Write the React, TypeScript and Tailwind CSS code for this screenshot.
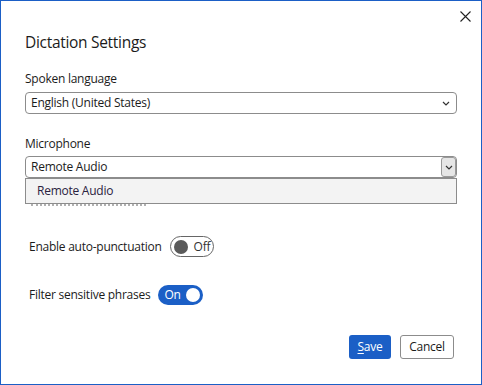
import React from "react";

const Chevron = () => (
  <svg width="8" height="5" viewBox="0 0 8 5" fill="none">
    <path d="M1 1l3 3 3-3" stroke="#333" strokeWidth="1.2" />
  </svg>
);

const App = () => {
  return (
    <div
      className="relative w-[482px] h-[385px] bg-white border border-[#1b5fc6] text-[#1b1b1b]"
      style={{ fontFamily: '"Open Sans", "Noto Sans", sans-serif' }}
    >
      {/* close */}
      <button className="absolute top-[9px] right-[10px] w-[12px] h-[12px] flex items-center justify-center">
        <svg width="11" height="11" viewBox="0 0 11 11">
          <path d="M0.5 0.5l10 10M10.5 0.5l-10 10" stroke="#222" strokeWidth="1.1" />
        </svg>
      </button>

      <div className="flex flex-col pl-[24px] pr-[24px] text-[12px] tracking-[-0.25px]">
        <h1 className="mt-[29px] text-[15.5px] leading-[24px] tracking-[-0.3px]">Dictation Settings</h1>

        <label className="mt-[16px] leading-[18px]">Spoken language</label>
        <div className="mt-[4px] h-[22px] w-[432px] rounded-[4px] border border-[#8c8c8c] flex items-center justify-between pl-[5px] pr-[6px]">
          <span>English (United States)</span>
          <Chevron />
        </div>

        <label className="mt-[21px] leading-[18px]">Microphone</label>
        <div className="relative mt-[3px]">
          <div className="h-[22px] w-[432px] rounded-[4px] border border-[#8c8c8c] flex items-center justify-between pl-[5px]">
            <span>Remote Audio</span>
            <div className="h-[20px] w-[15px] rounded-[3px] border border-[#9a9a9a] bg-[#e6e6e6] flex items-center justify-center">
              <Chevron />
            </div>
          </div>
          {/* open list */}
          <div className="absolute left-0 top-[22px] z-10 h-[26px] w-[432px] bg-[#f3f3f3] border border-[#8c8c8c] flex items-center pl-[11px]">
            <span className="text-[#2a2240]">Remote Audio</span>
          </div>
        </div>
        {/* meter under the list */}
        <div className="mt-[26px] ml-[6px] h-[3px] w-[115px] border-t-2 border-dotted border-[#b0b0b0]" />

        <div className="mt-[29px] ml-[4px] flex items-center gap-[8px]">
          <span>Enable auto-punctuation</span>
          <div className="h-[21px] w-[44px] rounded-full border border-[#666] flex items-center pl-[3px] gap-[6px]">
            <div className="h-[14px] w-[14px] rounded-full bg-[#5a5a5a]" />
            <span className="text-[#333]">Off</span>
          </div>
        </div>

        <div className="mt-[28px] ml-[4px] flex items-center gap-[8px]">
          <span>Filter sensitive phrases</span>
          <div className="h-[20px] w-[45px] rounded-full bg-[#1b5fc6] flex items-center justify-between pl-[6px] pr-[3px]">
            <span className="text-white">On</span>
            <div className="h-[14px] w-[14px] rounded-full bg-white" />
          </div>
        </div>

        <div className="mt-[30px] flex justify-end gap-[9px] pr-[3px]">
          <button className="h-[24px] w-[42px] rounded-[3px] bg-[#1b5fc6] text-white">
            <span className="underline underline-offset-2">S</span>ave
          </button>
          <button className="h-[24px] w-[54px] rounded-[3px] border border-[#8c8c8c] bg-white">
            Cancel
          </button>
        </div>
      </div>
    </div>
  );
};

export default App;
